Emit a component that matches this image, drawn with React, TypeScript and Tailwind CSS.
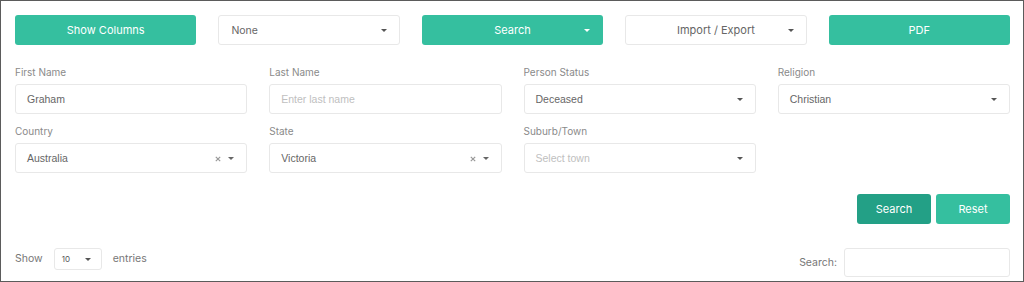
const teal = 'bg-[#35bf9f]';

function Caret({ className = '' }: { className?: string }) {
  return (
    <svg width="6" height="3" viewBox="0 0 6 3" className={className}>
      <path d="M0 0h6L3 3z" fill="currentColor" />
    </svg>
  );
}

function Clear() {
  return (
    <svg width="6" height="6" viewBox="0 0 6 6" className="text-[#999]">
      <path d="M0.8 0.8l4.4 4.4M5.2 0.8L0.8 5.2" stroke="currentColor" strokeWidth="1.2" />
    </svg>
  );
}

function Field({ label, children }: { label: string; children: React.ReactNode }) {
  return (
    <div className="flex flex-col">
      <label className="text-[10px] leading-[16px] text-[#8a8a8a]">{label}</label>
      <div className="mt-[4px] h-[30px] rounded-[3px] border border-[#e8e8e8] bg-white flex items-center pt-[1px] pl-[11px] pr-[12px] font-['Liberation_Sans',Arial,sans-serif] text-[10.5px]">
        {children}
      </div>
    </div>
  );
}

export default function App() {
  return (
    <div className="w-[1024px] h-[282px] border border-[#5b5b5b] bg-white pl-[14px] pr-[13px] pt-[14px] font-['Inter',sans-serif] overflow-hidden">
      {/* toolbar */}
      <div className="grid grid-cols-5 gap-x-[22px]">
        <button className={`${teal} h-[30px] rounded-[3px] text-white text-[11px]`}>
          Show Columns
        </button>
        <div className="h-[30px] rounded-[3px] border border-[#e8e8e8] flex items-center justify-between pt-[1px] pl-[12px] pr-[12px] text-[10.5px] text-[#666]">
          <span>None</span>
          <Caret className="text-[#555]" />
        </div>
        <button className={`${teal} relative h-[30px] rounded-[3px] text-white text-[11px]`}>
          Search
          <Caret className="absolute right-[13px] top-[14px] text-white" />
        </button>
        <div className="relative h-[30px] rounded-[3px] border border-[#e8e8e8] flex items-center justify-center text-[11px] text-[#666]">
          Import / Export
          <Caret className="absolute right-[12px] top-[13px] text-[#555]" />
        </div>
        <button className={`${teal} h-[30px] rounded-[3px] text-white text-[11px]`}>PDF</button>
      </div>

      {/* filters */}
      <div className="mt-[19px] grid grid-cols-4 gap-x-[22px] gap-y-[9px]">
        <Field label="First Name">
          <span className="text-[#666]">Graham</span>
        </Field>
        <Field label="Last Name">
          <span className="text-[#c0c0c0]">Enter last name</span>
        </Field>
        <Field label="Person Status">
          <span className="flex-1 text-[#666]">Deceased</span>
          <Caret className="text-[#555]" />
        </Field>
        <Field label="Religion">
          <span className="flex-1 text-[#666]">Christian</span>
          <Caret className="text-[#555]" />
        </Field>
        <Field label="Country">
          <span className="flex-1 text-[#666]">Australia</span>
          <Clear />
          <Caret className="ml-[7px] text-[#666]" />
        </Field>
        <Field label="State">
          <span className="flex-1 text-[#666]">Victoria</span>
          <Clear />
          <Caret className="ml-[7px] text-[#666]" />
        </Field>
        <Field label="Suburb/Town">
          <span className="flex-1 text-[#c0c0c0]">Select town</span>
          <Caret className="text-[#555]" />
        </Field>
      </div>

      <div className="mt-[21px] flex justify-end gap-[5px]">
        <button className="h-[30px] w-[74px] rounded-[3px] bg-[#23a086] text-white text-[11px]">Search</button>
        <button className={`${teal} h-[30px] w-[74px] rounded-[3px] text-white text-[11px]`}>Reset</button>
      </div>

      {/* table controls */}
      <div className="mt-[24px] flex justify-between items-start">
        <div className="flex items-center h-[22px] text-[10.5px] text-[#777]">
          <span>Show</span>
          <div className="ml-[11px] h-[22px] w-[48px] rounded-[3px] border border-[#e8e8e8] flex items-center justify-between pl-[7px] pr-[10px] text-[8px] text-[#555]">
            <span>10</span>
            <Caret className="text-[#555]" />
          </div>
          <span className="ml-[11px]">entries</span>
        </div>
        <div className="flex items-center">
          <span className="text-[10.5px] text-[#777]">Search:</span>
          <div className="ml-[7px] h-[29px] w-[166px] rounded-[3px] border border-[#e8e8e8]" />
        </div>
      </div>
    </div>
  );
}
